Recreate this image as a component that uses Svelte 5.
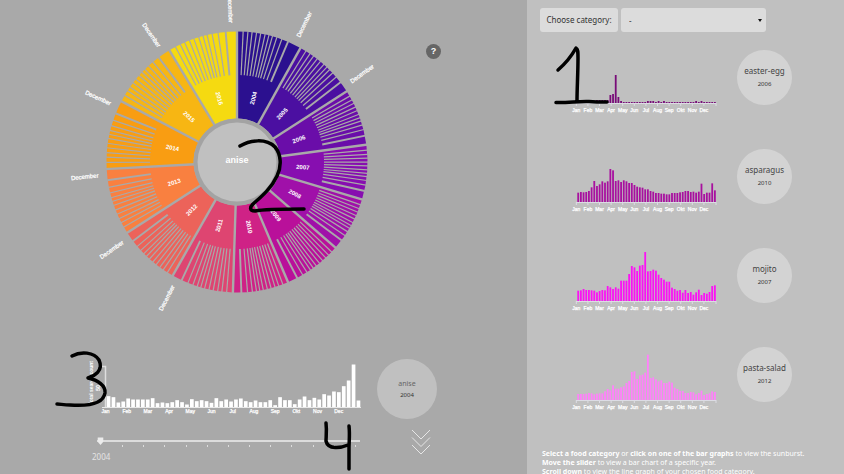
<script>
  const monthNames = ['Jan', 'Feb', 'Mar', 'Apr', 'May', 'Jun', 'Jul', 'Aug', 'Sep', 'Okt', 'Nov', 'Dec'];

  // end angle of each year slice, share of December, slice colour, outer label shown
  const years = [
    { year: 2004, end: 29.1, dec: 0.21, color: '#2b108f', label: true },
    { year: 2005, end: 57.2, dec: 0.17, color: '#4b0fa1', label: true },
    { year: 2006, end: 82.4, dec: 0.16, color: '#6a0da9' },
    { year: 2007, end: 106.7, dec: 0.16, color: '#870eb0' },
    { year: 2008, end: 131, dec: 0.17, color: '#a010a9' },
    { year: 2009, end: 157, dec: 0.17, color: '#b9109a' },
    { year: 2010, end: 181.8, dec: 0.15, color: '#cf2286' },
    { year: 2011, end: 209.5, dec: 0.16, color: '#de4571', label: true },
    { year: 2012, end: 237.2, dec: 0.16, color: '#ec635a', label: true },
    { year: 2013, end: 266.9, dec: 0.165, color: '#f98040', label: true },
    { year: 2014, end: 297.7, dec: 0.19, color: '#f99d12', label: true },
    { year: 2015, end: 328.8, dec: 0.18, color: '#f7b613', label: true },
    { year: 2016, end: 360, dec: 0.16, color: '#f5da11', label: true }
  ];

  const shares = [11, 8.5, 7.5, 8, 7.5, 8, 7, 6.5, 8, 9.5, 12];
  const shareSum = shares.reduce((a, b) => a + b, 0);

  const point = (deg, r) => {
    const a = (deg * Math.PI) / 180;
    return `${(Math.sin(a) * r).toFixed(2)} ${(-Math.cos(a) * r).toFixed(2)}`;
  };
  const arc = (from, to, r0, r1) =>
    `M${point(from, r0)}L${point(from, r1)}A${r1} ${r1} 0 0 1 ${point(to, r1)}L${point(to, r0)}A${r0} ${r0} 0 0 0 ${point(from, r0)}Z`;
  const turn = (deg) => (deg > 180 ? deg - 270 : deg - 90);

  const slices = years.map((y, i) => {
    const start = i ? years[i - 1].end : 0;
    const span = y.end - start;
    let at = start;
    const lines = shares.map((s) => (at += (s / shareSum) * span * (1 - y.dec)));
    return { ...y, start, lines, mid: start + span / 2, decMid: y.end - (span * y.dec) / 2 };
  });

  const fromTops = (base, tops) => tops.map((t) => (base - t) / 3);

  const anise = fromTops(202, [168, 171, 187, 184, 175, 178, 178, 178, 178, 174, 189, 187, 189, 186, 180, 186, 193, 177, 183, 180, 183, 188, 174, 183, 178, 184, 178, 175, 183, 186, 181, 186, 186, 180, 195, 171, 180, 180, 192, 178, 169, 180, 173, 178, 162, 166, 154, 156, 138, 121, 73, 181]);

  const easter = Array(52).fill(1);
  [3, 3, 3, 3, 3, 8, 9, 28, 6, 2].forEach((v, i) => (easter[i + 7] = v));
  [26, 27, 28, 30, 32, 44, 46].forEach((i) => (easter[i] = 2));

  const items = [
    { name: 'easter-egg', year: 2006, color: '#780c78', bars: easter },
    { name: 'asparagus', year: 2010, color: '#a8109f', bars: fromTops(159, [131, 129, 130, 129, 126, 115, 96, 111, 106, 97, 101, 97, 60, 64, 96, 94, 99, 94, 97, 102, 102, 108, 113, 115, 116, 121, 121, 126, 128, 132, 132, 134, 134, 136, 136, 132, 132, 132, 130, 129, 126, 126, 129, 128, 131, 128, 104, 135, 131, 131, 103, 124]) },
    { name: 'mojito', year: 2007, color: '#fb12f4', bars: fromTops(186, [155, 154, 150, 153, 153, 154, 155, 160, 156, 153, 154, 141, 145, 150, 145, 149, 125, 125, 125, 105, 81, 85, 96, 80, 78, 39, 97, 96, 92, 95, 107, 117, 122, 128, 128, 146, 150, 155, 153, 161, 153, 162, 159, 167, 160, 152, 168, 162, 164, 159, 141, 139]) },
    { name: 'pasta-salad', year: 2012, color: '#ff80fa', bars: fromTops(170, [152, 152, 152, 151, 149, 150, 153, 151, 150, 150, 144, 137, 141, 126, 136, 136, 132, 129, 119, 113, 86, 84, 107, 96, 94, 88, 34, 104, 102, 108, 114, 111, 119, 119, 115, 118, 133, 137, 143, 143, 149, 149, 146, 147, 153, 149, 142, 155, 152, 150, 144, 146]) }
  ];
</script>

<div class="page">
  <main class="left">
    <div class="top">
      <svg class="sunburst" viewBox="-170 -162 340 324" aria-label="Sunburst of searches for anise">
        {#each slices as s}
          <path d={arc(s.start, s.end, 43.5, 130.5)} fill={s.color} />
          {#each s.lines as a, i}
            <path d="M{point(a, 87)}L{point(a, 131)}" stroke="#a9a9a9" stroke-width={i === 10 ? 1.9 : 1.2} />
          {/each}
        {/each}
        {#each slices as s}
          <path d="M{point(s.end, 42)}L{point(s.end, 132)}" stroke="#a9a9a9" stroke-width="2.4" />
          <text class="year" text-anchor="middle" transform="translate({point(s.mid, 66)}) rotate({turn(s.mid)})" y="2">{s.year}</text>
          {#if s.label}
            <text class="december" text-anchor="middle" transform="translate({point(s.decMid, 153)}) rotate({turn(s.decMid)})" y="2">December</text>
          {/if}
        {/each}
        <circle r="43.5" fill="#a3a3a3" />
        <circle r="39.5" fill="#c0c0c0" />
        <text class="center" text-anchor="middle" y="1">anise</text>
      </svg>
      <button class="help" aria-label="Help">?</button>
    </div>

    <div class="bottom">
      <div class="timeline">
        <svg class="year-chart" viewBox="0 0 310 76" aria-label="Bar chart of anise in 2004">
          <path d="M41 22.5H48.5V63.5" fill="none" stroke="#dedede" stroke-width="1.5" />
          <text class="axis" text-anchor="middle" transform="translate(36 39) rotate(-90)">Total search count</text>
          <text class="tick" text-anchor="middle" transform="translate(43 44) rotate(-90)">50</text>
          {#each anise as h, i}
            <rect x={49.7 + i * 4.9} y={63.5 - h} width="3.7" height={h} fill="#fff" />
          {/each}
          <path d="M45 63.5H304" stroke="#e8e8e8" />
          {#each monthNames as m, i}
            <text class="tick" text-anchor="middle" x={48.5 + i * 21.2} y="68.5">{m}</text>
          {/each}
        </svg>
        <div class="slider">
          <input type="range" min="2004" max="2016" value="2004" aria-label="Year" />
          <div class="marks">
            {#each years as y}<i></i>{/each}
          </div>
          <output>2004</output>
        </div>
      </div>
      <div class="side">
        <div class="bubble big"><span class="name">anise</span><span class="when">2004</span></div>
        <a class="down" href="#line-graph" aria-label="Scroll down">
          <svg viewBox="0 0 20 27" fill="none" stroke="#e6e6e6" stroke-width="1">
            <path d="M1 1L10 10L19 1M1 8.5L10 17.5L19 8.5M1 16L10 25L19 16" />
          </svg>
        </a>
      </div>
    </div>

    <svg class="ink" viewBox="0 0 400 474" aria-hidden="true">
      <path d="M240 146C250 140 266 138 275 147C281 154 282 166 277 176C271 189 261 197 253 204C250 207 249 211 255 211C265 209 290 209 304 209" />
      <path d="M72 356C81 351 94 352 99 360C104 371 94 376 88 378C98 380 106 386 105 393C103 405 84 406 70 405C64 405 60 404 57 404" />
      <path d="M326 423C327 431 326 437 326 441C328 450 341 448 348 445M349 426C350 435 349 442 349 448V469" />
    </svg>
  </main>

  <aside class="right">
    <div class="picker">
      <label for="category">Choose category:</label>
      <div class="select">
        <select id="category"><option>-</option></select>
      </div>
    </div>

    <div class="items">
      {#each items as item}
        <div class="item">
          <svg class="mini" viewBox="0 0 160 64" aria-label="Bar chart of {item.name}">
            {#each item.bars as h, i}
              <rect x={10.3 + i * 2.68} y={53 - h} width="1.8" height={h} fill={item.color} />
            {/each}
            <path d="M9 53.5H149M149 53V56" stroke="#dcdce4" fill="none" />
            {#each monthNames as m, i}
              <path d="M{9.3 + i * 11.6} 53V56" stroke="#dcdce4" />
              <text class="tick" text-anchor="middle" x={9.3 + i * 11.6} y="61.5">{m}</text>
            {/each}
          </svg>
          <div class="bubble"><span class="name">{item.name}</span><span class="when">{item.year}</span></div>
        </div>
      {/each}
    </div>

    <div class="hints">
      <p><b>Select a food category</b> or <b>click on one of the bar graphs</b> to view the sunburst.</p>
      <p><b>Move the slider</b> to view a bar chart of a specific year.</p>
      <p><b>Scroll down</b> to view the line graph of your chosen food category.</p>
    </div>

    <svg class="ink" viewBox="0 0 100 474" aria-hidden="true">
      <path d="M31 70C39 63 44 57 49 48C51 49 51 52 51 58C51 74 50 88 50 101M29 102.5C40 103 52 101 62 101.5C69 102 75 102 80 102" />
    </svg>
  </aside>
</div>

<style>
  :global(body) {
    margin: 0;
    overflow: hidden;
  }
  .page {
    display: flex;
    height: 100vh;
    overflow: hidden;
    font-family: 'Noto Sans', sans-serif;
    color: #444;
  }
  .left,
  .right {
    position: relative;
    box-sizing: border-box;
  }
  .left {
    flex: 527;
    background: #a9a9a9;
  }
  .right {
    flex: 317;
    min-width: 0;
    background: #c0c0c0;
  }
  svg {
    display: block;
    flex: none;
    overflow: visible;
    font-family: 'Liberation Sans', Arial, sans-serif;
    fill: none;
  }
  text {
    fill: #fff;
  }
  .top {
    display: flex;
    align-items: flex-start;
    padding-left: 67px;
  }
  .sunburst {
    width: 340px;
    height: 324px;
  }
  .year {
    font-size: 6px;
    font-weight: bold;
  }
  .december {
    font-size: 6px;
    stroke: #fff;
    stroke-width: 0.25;
  }
  .center {
    font-size: 9px;
    font-weight: bold;
  }
  .help {
    width: 15px;
    height: 15px;
    margin: 44px 0 0 19px;
    padding: 0;
    border: 0;
    border-radius: 50%;
    background: #666;
    color: #fff;
    font: bold 9px/15px 'Liberation Sans', sans-serif;
  }
  .bottom {
    display: flex;
    gap: 10px;
    padding: 20px 0 0 57px;
  }
  .timeline {
    width: 310px;
  }
  .year-chart {
    width: 310px;
    height: 76px;
  }
  .axis {
    font-size: 5px;
    font-weight: bold;
  }
  .tick {
    font-size: 5px;
    stroke: #fff;
    stroke-width: 0.25;
  }
  .slider {
    margin: 17px 7px 0 40px;
  }
  input {
    display: block;
    width: 100%;
    height: 8px;
    margin: 0;
    appearance: none;
    background: linear-gradient(#dcdcdc, #dcdcdc) center / 100% 2px no-repeat;
  }
  input::-webkit-slider-thumb {
    appearance: none;
    width: 7px;
    height: 8px;
    background: #ececec;
    clip-path: polygon(10% 5%, 90% 5%, 90% 60%, 50% 100%, 10% 60%);
  }
  .marks {
    display: flex;
    justify-content: space-between;
    padding: 0 4px;
  }
  .marks i {
    width: 1px;
    height: 2px;
    background: #ddd;
  }
  .marks i:first-child {
    visibility: hidden;
  }
  output {
    display: block;
    width: 18px;
    margin: 4px 0 0 -5px;
    font-size: 8px;
    line-height: 12px;
    color: #e4e4e4;
  }
  .bubble {
    display: flex;
    flex: none;
    flex-direction: column;
    align-items: center;
    justify-content: center;
    gap: 3px;
    width: 55px;
    height: 55px;
    border-radius: 50%;
    background: #d3d3d3;
    line-height: 10px;
  }
  .bubble.big {
    width: 60px;
    height: 60px;
    gap: 1px;
    margin-top: 15px;
    background: #c0c0c0;
    color: #666;
  }
  .name {
    font-size: 8px;
  }
  .big .name {
    font-size: 7px;
  }
  .when {
    font-size: 6px;
    color: #333;
  }
  .down {
    display: block;
    width: 20px;
    margin: 10px 0 0 34px;
  }
  .down svg {
    width: 20px;
    height: 27px;
  }
  .picker {
    display: flex;
    gap: 3px;
    padding: 8px 0 0 13px;
    font-size: 8px;
    line-height: 24px;
    color: #333;
  }
  label {
    box-sizing: border-box;
    width: 78px;
    border-radius: 3px;
    background: #dcdcdc;
    text-align: center;
  }
  .select {
    position: relative;
    width: 145px;
    height: 24px;
  }
  .select::after {
    content: '';
    position: absolute;
    top: 11px;
    right: 4px;
    border: 2px solid transparent;
    border-top: 3px solid #111;
    border-bottom: 0;
    pointer-events: none;
  }
  select {
    width: 100%;
    height: 24px;
    padding: 0 8px;
    appearance: none;
    border: 0;
    border-radius: 3px;
    background: #dcdcdc;
    color: #333;
    font: 8px 'Noto Sans', sans-serif;
  }
  .items {
    display: flex;
    flex-direction: column;
    gap: 44px;
    padding: 18px 0 0 40px;
  }
  .item {
    display: flex;
    gap: 10px;
    height: 55px;
  }
  .mini {
    width: 160px;
    height: 64px;
  }
  .hints {
    padding: 47px 0 0 15px;
    color: #fff;
    font-size: 7px;
    line-height: 9px;
    white-space: nowrap;
  }
  p {
    margin: 0;
  }
  .ink {
    position: absolute;
    top: 0;
    left: 0;
    height: 474px;
    stroke: #000;
    stroke-width: 3.5;
    stroke-linecap: round;
    stroke-linejoin: round;
    pointer-events: none;
  }
</style>
